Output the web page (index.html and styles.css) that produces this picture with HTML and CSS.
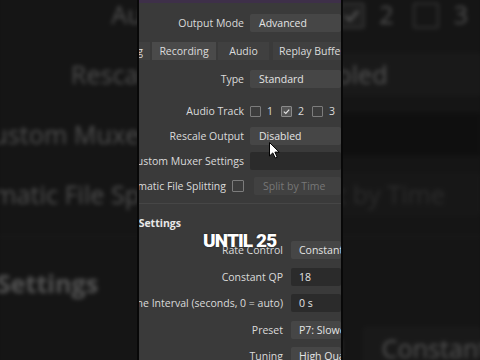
FILE: index.html
```html
<!DOCTYPE html>
<html lang="en">
<head>
  <meta charset="UTF-8">
  <meta name="viewport" content="width=device-width, initial-scale=1.0">
  <title>Output Settings</title>
  <link rel="stylesheet" href="styles.css">
</head>
<body>
  <div class="backdrop" aria-hidden="true"></div>

  <div class="panel">
    <div class="topbar"></div>

    <div class="form form-top">
      <div class="row">
        <span class="label">Output Mode</span>
        <span class="field combo">Advanced</span>
      </div>
    </div>

    <div class="tabs">
      <span class="tab tab-streaming">Streaming</span>
      <span class="tab tab-recording active">Recording</span>
      <span class="tab tab-audio">Audio</span>
      <span class="tab tab-replay">Replay Buffer</span>
    </div>

    <div class="form">
      <div class="row">
        <span class="label">Type</span>
        <span class="field combo">Standard</span>
      </div>
      <div class="row row-tracks">
        <span class="label">Audio Track</span>
        <span class="checks">
          <span class="check-item"><span class="box"></span>1</span>
          <span class="check-item"><span class="box checked"><svg viewBox="0 0 10 10"><path d="M2 5.2 L4.2 7.2 L8 2.8" /></svg></span>2</span>
          <span class="check-item"><span class="box"></span>3</span>
        </span>
      </div>
      <div class="row">
        <span class="label">Rescale Output</span>
        <span class="field combo">Disabled</span>
      </div>
      <div class="row">
        <span class="label">Custom Muxer Settings</span>
        <span class="field input"></span>
      </div>
      <div class="row">
        <span class="label">Automatic File Splitting <span class="box box-split"></span></span>
        <span class="field combo disabled split">Split by Time</span>
      </div>
    </div>

    <div class="group">
      <div class="group-title">Encoder Settings</div>
      <div class="form form-wide">
        <div class="row">
          <span class="label">Rate Control</span>
          <span class="field combo">Constant QP</span>
        </div>
        <div class="row">
          <span class="label">Constant QP</span>
          <span class="field input">18</span>
        </div>
        <div class="row">
          <span class="label">Keyframe Interval (seconds, 0 = auto)</span>
          <span class="field input">0 s</span>
        </div>
        <div class="row">
          <span class="label">Preset</span>
          <span class="field combo">P7: Slowest (Best Quality)</span>
        </div>
        <div class="row">
          <span class="label">Tuning</span>
          <span class="field combo">High Quality</span>
        </div>
      </div>
    </div>

    <div class="caption">UNTIL 25</div>

    <svg class="cursor" viewBox="0 0 11 17">
      <path d="M0.5 0.5 L0.5 14 L3.8 10.9 L6.2 16 L8.2 15.1 L5.9 10.1 L10.2 10.1 Z" />
    </svg>
  </div>

  <script>
    // blurred copy of the panel behind it, like the video fill
    const panel = document.querySelector('.panel');
    document.querySelector('.backdrop').appendChild(panel.cloneNode(true));
  </script>
</body>
</html>
```

FILE: styles.css
```css
body {
  margin: 0;
  width: 480px;
  height: 360px;
  overflow: hidden;
  background: #0e0e0e;
  display: flex;
  justify-content: center;
  position: relative;
  font-family: "Open Sans", "Noto Sans", sans-serif;
  font-size: 10.5px;
  color: #dadada;
}

.backdrop {
  position: absolute;
  inset: 0;
  display: flex;
  justify-content: center;
  filter: blur(2px) brightness(0.36);
}

.backdrop .panel {
  transform: scale(2.4);
  transform-origin: 50% 50%;
  box-shadow: none;
}

.panel {
  width: 202px;
  height: 360px;
  flex-shrink: 0;
  background: #3a3a3a;
  overflow: hidden;
  position: relative;
  display: flex;
  flex-direction: column;
  box-shadow: 0 0 0 2px #080808;
}

.topbar {
  height: 3px;
  flex-shrink: 0;
  background: #3e3049;
}

.form {
  display: flex;
  flex-direction: column;
  gap: 7px;
  margin-top: 10px;
}

.form-top {
  margin-top: 11px;
}

.row {
  display: flex;
  align-items: center;
  gap: 6px;
  height: 18px;
  flex-shrink: 0;
}

.label {
  width: 105px;
  flex-shrink: 0;
  display: flex;
  justify-content: flex-end;
  align-items: center;
  gap: 6px;
  white-space: nowrap;
}

.field {
  flex: 1;
  min-width: 0;
  height: 18px;
  line-height: 18px;
  padding: 0 9px;
  border-radius: 2px;
  white-space: nowrap;
  overflow: hidden;
  color: #e4e4e4;
}

.combo {
  background: #464646;
}

.input {
  background: #2b2b2b;
}

.disabled {
  color: #777;
  background: #414141;
}

.split {
  margin-left: 4px;
}

.tabs {
  display: flex;
  gap: 2px;
  margin-top: 10px;
  height: 18px;
  flex-shrink: 0;
  white-space: nowrap;
}

.tab {
  flex-shrink: 0;
  line-height: 18px;
  text-align: center;
  background: #404040;
  color: #dcdcdc;
}

.tab.active {
  background: #4a4a4a;
}

.tab-streaming {
  width: 60px;
  margin-left: -49px;
  text-align: right;
  padding-right: 7px;
  box-sizing: border-box;
}

.tab-recording {
  width: 64px;
}

.tab-audio {
  width: 51px;
  margin-right: 2px;
}

.tab-replay {
  width: 80px;
  text-align: left;
  padding-left: 6px;
}

.row-tracks {
  margin-top: 7px;
}

.checks {
  display: flex;
  align-items: center;
  gap: 8px;
}

.check-item {
  display: flex;
  align-items: center;
  gap: 6px;
}

.box {
  width: 9px;
  height: 9px;
  flex-shrink: 0;
  border: 1px solid #7c7c7c;
  border-radius: 1px;
  background: #3c3c3c;
}

.box.checked {
  background: #555;
  border-color: #8a8a8a;
}

.box svg {
  display: block;
  width: 9px;
  height: 9px;
}

.box path {
  fill: none;
  stroke: #e6e6e6;
  stroke-width: 1.3;
}

.box-split {
  width: 10px;
  height: 10px;
}

.group {
  margin-top: 8px;
  border-top: 1px solid #464646;
}

.group-title {
  width: 42px;
  margin-top: 12px;
  display: flex;
  justify-content: flex-end;
  white-space: nowrap;
  font-weight: 700;
  line-height: 14px;
  color: #e8e8e8;
}

.form-wide {
  margin-top: 11px;
  gap: 8.5px;
}

.form-wide .row {
  gap: 8px;
}

.form-wide .label {
  width: 144px;
}

.form-wide .field {
  padding: 0 8px;
}

.caption {
  position: absolute;
  left: 64px;
  top: 230px;
  font-family: Roboto, "Open Sans", sans-serif;
  font-weight: 900;
  font-size: 19px;
  letter-spacing: -0.9px;
  color: #fff;
  line-height: 22px;
  text-shadow: 0 0 2px rgba(0, 0, 0, 0.6);
}

.cursor {
  position: absolute;
  left: 130px;
  top: 142px;
  width: 11px;
  height: 17px;
}

.cursor path {
  fill: #fff;
  stroke: #000;
  stroke-width: 1;
}
```
